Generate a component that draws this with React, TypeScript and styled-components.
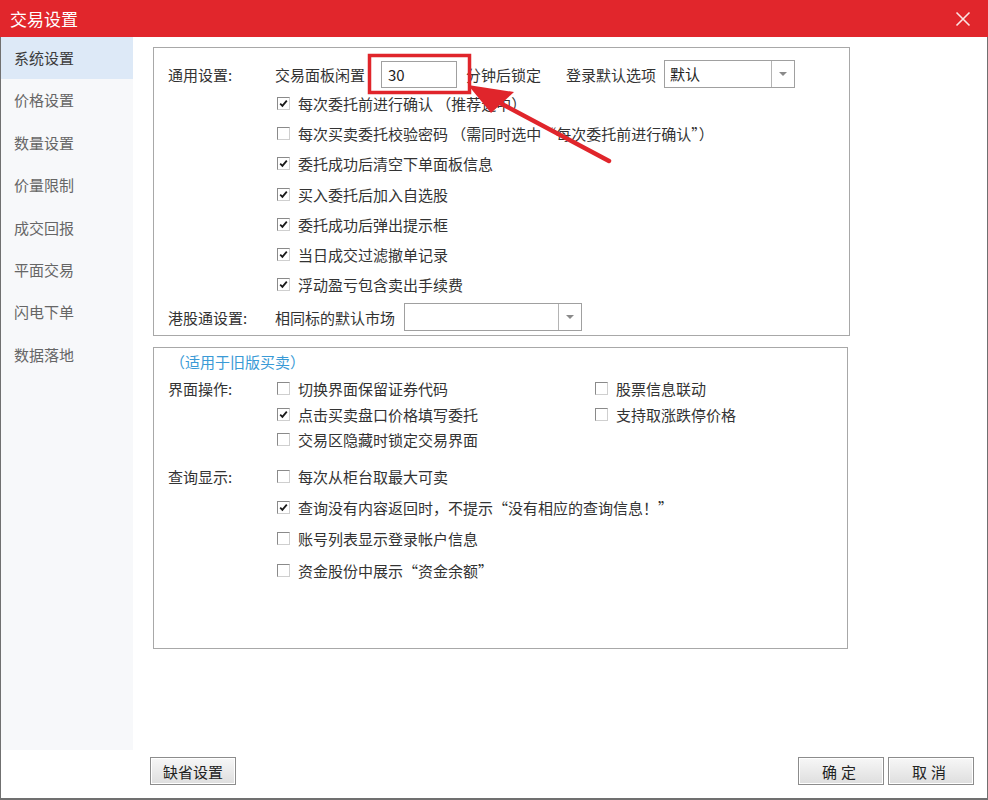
import { Fragment } from "react";
import { createGlobalStyle, styled } from "styled-components";

const GlobalStyle = createGlobalStyle`
    html, body {
        margin: 0;
        padding: 0;
        background: #fff;
    }
    body {
        font-family: "Noto Sans CJK SC", "Microsoft YaHei", sans-serif;
        color: #333;
    }
`

const RED = '#e1262c'

export const Window = styled.div`
    position: relative;
    width: 988px;
    height: 800px;
    display: flex;
    flex-direction: column;
    background: #fff;
    box-sizing: border-box;
    overflow: hidden;
`

export const TitleBar = styled.div`
    height: 37px;
    flex: none;
    display: flex;
    align-items: center;
    justify-content: space-between;
    padding: 0 10px 0 10px;
    background: ${RED};
    color: #fff;
    font-size: 17px;
    line-height: 37px;
`

export const CloseButton = styled.div`
    width: 22px;
    height: 22px;
    display: flex;
    align-items: center;
    justify-content: center;
    margin-right: 4px;
`

export const Body = styled.div`
    height: 713px;
    flex: none;
    display: flex;
    border-left: 1px solid #707070;
    border-right: 1px solid #707070;
`

export const Sidebar = styled.div`
    width: 132px;
    flex: none;
    background: #f7f8fa;
`

export const NavItem = styled.div<{ $active?: boolean }>`
    height: 42.4px;
    line-height: 42.4px;
    padding-left: 13px;
    font-size: 15px;
    color: ${p => p.$active ? '#3c3c3c' : '#666'};
    background: ${p => p.$active ? '#dde9f7' : 'transparent'};
`

export const Main = styled.div`
    flex: 1;
    padding: 10px 0 0 20px;
    display: flex;
    flex-direction: column;
    gap: 11px;
`

export const GroupBox = styled.div<{ $width: number; $height: number }>`
    width: ${p => p.$width}px;
    height: ${p => p.$height}px;
    box-sizing: border-box;
    border: 1px solid #a8a8a8;
    padding: 0 0 0 14px;
    font-size: 15px;
`

export const Row = styled.div<{ $height: number }>`
    height: ${p => p.$height}px;
    display: flex;
    align-items: center;
    white-space: nowrap;
`

export const RowLabel = styled.div`
    width: 107px;
    flex: none;
    color: #333;
`

export const Note = styled.div`
    height: 26px;
    line-height: 26px;
    margin-top: 1px;
    padding-left: 2px;
    color: #3a9ad6;
    font-size: 15px;
`

export const Text = styled.span<{ $ml?: number }>`
    margin-left: ${p => p.$ml ?? 0}px;
    color: #333;
`

export const TextInput = styled.div<{ $ml?: number }>`
    width: 76px;
    height: 27px;
    margin-left: ${p => p.$ml ?? 0}px;
    box-sizing: border-box;
    border: 1px solid #a0a0a0;
    padding-left: 6px;
    line-height: 25px;
    color: #222;
    background: #fff;
`

export const Select = styled.div<{ $width: number; $ml?: number }>`
    width: ${p => p.$width}px;
    height: 28px;
    margin-left: ${p => p.$ml ?? 0}px;
    box-sizing: border-box;
    border: 1px solid #a0a0a0;
    display: flex;
    background: #fff;
`

export const SelectValue = styled.div`
    flex: 1;
    padding-left: 5px;
    line-height: 26px;
    color: #222;
`

export const SelectArrow = styled.div`
    width: 22px;
    border-left: 1px solid #b4b4b4;
    display: flex;
    align-items: center;
    justify-content: center;
    &::after {
        content: "";
        border-left: 4px solid transparent;
        border-right: 4px solid transparent;
        border-top: 4px solid #8a8a8a;
    }
`

export const Check = styled.label<{ $width?: number }>`
    display: flex;
    align-items: center;
    gap: 8px;
    margin-left: 2px;
    width: ${p => p.$width ? `${p.$width}px` : 'auto'};
    flex: none;
    color: #333;
`

export const Box = styled.span`
    width: 13px;
    height: 13px;
    flex: none;
    box-sizing: border-box;
    border: 1px solid;
    border-color: #8a8a8a #cfcfcf #cfcfcf #8a8a8a;
    background: #fff;
    display: flex;
    align-items: center;
    justify-content: center;
`

export const Grid = styled.div<{ $rowHeight: number }>`
    display: grid;
    grid-template-columns: 107px 318px auto;
    grid-auto-rows: ${p => p.$rowHeight}px;
    align-items: center;
    white-space: nowrap;
`

export const Footer = styled.div`
    flex: 1;
    display: flex;
    justify-content: space-between;
    align-items: flex-start;
    padding: 7px 13px 0 149px;
    border-left: 1px solid #707070;
    border-right: 1px solid #707070;
    border-bottom: 2px solid #707070;
`

export const ButtonGroup = styled.div`
    display: flex;
    gap: 4px;
`

export const Button = styled.button<{ $spaced?: boolean }>`
    height: 28px;
    min-width: 86px;
    padding: 0 10px;
    font-family: inherit;
    font-size: 15px;
    color: #222;
    letter-spacing: ${p => p.$spaced ? '4px' : '0'};
    border: 1px solid #8c8c8c;
    background: linear-gradient(#f7f7f7, #dedede);
    box-shadow: inset 0 0 0 1px #fff;
`

export const Annotation = styled.svg`
    position: absolute;
    left: 0;
    top: 0;
    pointer-events: none;
`

function CheckItem({ checked, label, width }: { checked?: boolean; label: string; width?: number }) {
    return (
        <Check $width={width}>
            <Box>
                {checked && (
                    <svg width="9" height="9" viewBox="0 0 9 9">
                        <path d="M1.2 4.6 L3.4 6.8 L7.8 1.6" fill="none" stroke="#1a1a1a" strokeWidth="1.8" />
                    </svg>
                )}
            </Box>
            {label}
        </Check>
    )
}

const navItems = ['系统设置', '价格设置', '数量设置', '价量限制', '成交回报', '平面交易', '闪电下单', '数据落地']

const generalChecks = [
    { checked: true, label: '每次委托前进行确认 （推荐选中）' },
    { checked: false, label: '每次买卖委托校验密码 （需同时选中“每次委托前进行确认”）' },
    { checked: true, label: '委托成功后清空下单面板信息' },
    { checked: true, label: '买入委托后加入自选股' },
    { checked: true, label: '委托成功后弹出提示框' },
    { checked: true, label: '当日成交过滤撤单记录' },
    { checked: true, label: '浮动盈亏包含卖出手续费' },
]

const queryChecks = [
    { checked: false, label: '每次从柜台取最大可卖' },
    { checked: true, label: '查询没有内容返回时，不提示“没有相应的查询信息！”' },
    { checked: false, label: '账号列表显示登录帐户信息' },
    { checked: false, label: '资金股份中展示“资金余额”' },
]

export default function TradeSettings() {
    return (
        <>
            <GlobalStyle />
            <Window>
                <TitleBar>
                    交易设置
                    <CloseButton>
                        <svg width="16" height="16" viewBox="0 0 16 16">
                            <path d="M1.5 1.5 L14.5 14.5 M14.5 1.5 L1.5 14.5" stroke="#fbe3e3" strokeWidth="1.6" />
                        </svg>
                    </CloseButton>
                </TitleBar>
                <Body>
                    <Sidebar>
                        {navItems.map((n, i) => (
                            <NavItem key={n} $active={i === 0}>{n}</NavItem>
                        ))}
                    </Sidebar>
                    <Main>
                        <GroupBox $width={697} $height={289}>
                            <Row $height={28} style={{ marginTop: 12 }}>
                                <RowLabel>通用设置:</RowLabel>
                                <Text>交易面板闲置</Text>
                                <TextInput $ml={16}>30</TextInput>
                                <Text $ml={9}>分钟后锁定</Text>
                                <Text $ml={25}>登录默认选项</Text>
                                <Select $width={131} $ml={8}>
                                    <SelectValue>默认</SelectValue>
                                    <SelectArrow />
                                </Select>
                            </Row>
                            {generalChecks.map(c => (
                                <Row key={c.label} $height={30.3}>
                                    <RowLabel />
                                    <CheckItem checked={c.checked} label={c.label} />
                                </Row>
                            ))}
                            <Row $height={34}>
                                <RowLabel>港股通设置:</RowLabel>
                                <Text>相同标的默认市场</Text>
                                <Select $width={178} $ml={9}>
                                    <SelectValue />
                                    <SelectArrow />
                                </Select>
                            </Row>
                        </GroupBox>
                        <GroupBox $width={695} $height={302}>
                            <Note>（适用于旧版买卖）</Note>
                            <Grid $rowHeight={25.5} style={{ marginTop: 1 }}>
                                <RowLabel>界面操作:</RowLabel>
                                <CheckItem label="切换界面保留证券代码" width={316} />
                                <CheckItem label="股票信息联动" />
                                <span />
                                <CheckItem checked label="点击买卖盘口价格填写委托" width={316} />
                                <CheckItem label="支持取涨跌停价格" />
                                <span />
                                <CheckItem label="交易区隐藏时锁定交易界面" width={316} />
                            </Grid>
                            <Grid $rowHeight={31.3} style={{ marginTop: 8 }}>
                                {queryChecks.map((c, i) => (
                                    <Fragment key={c.label}>
                                        <RowLabel>{i === 0 ? '查询显示:' : ''}</RowLabel>
                                        <CheckItem checked={c.checked} label={c.label} />
                                        <span />
                                    </Fragment>
                                ))}
                            </Grid>
                        </GroupBox>
                    </Main>
                </Body>
                <Footer>
                    <Button>缺省设置</Button>
                    <ButtonGroup>
                        <Button $spaced>确定</Button>
                        <Button $spaced>取消</Button>
                    </ButtonGroup>
                </Footer>
                <Annotation width="988" height="800" viewBox="0 0 988 800">
                    <rect x="369.5" y="55.5" width="100" height="37" fill="none" stroke="#e0252b" strokeWidth="3.5" />
                    <line x1="500" y1="103" x2="609" y2="161" stroke="#e0252b" strokeWidth="4.5" strokeLinecap="round" />
                    <polygon points="468,85 514,92 491,113" fill="#e0252b" />
                </Annotation>
            </Window>
        </>
    )
}
